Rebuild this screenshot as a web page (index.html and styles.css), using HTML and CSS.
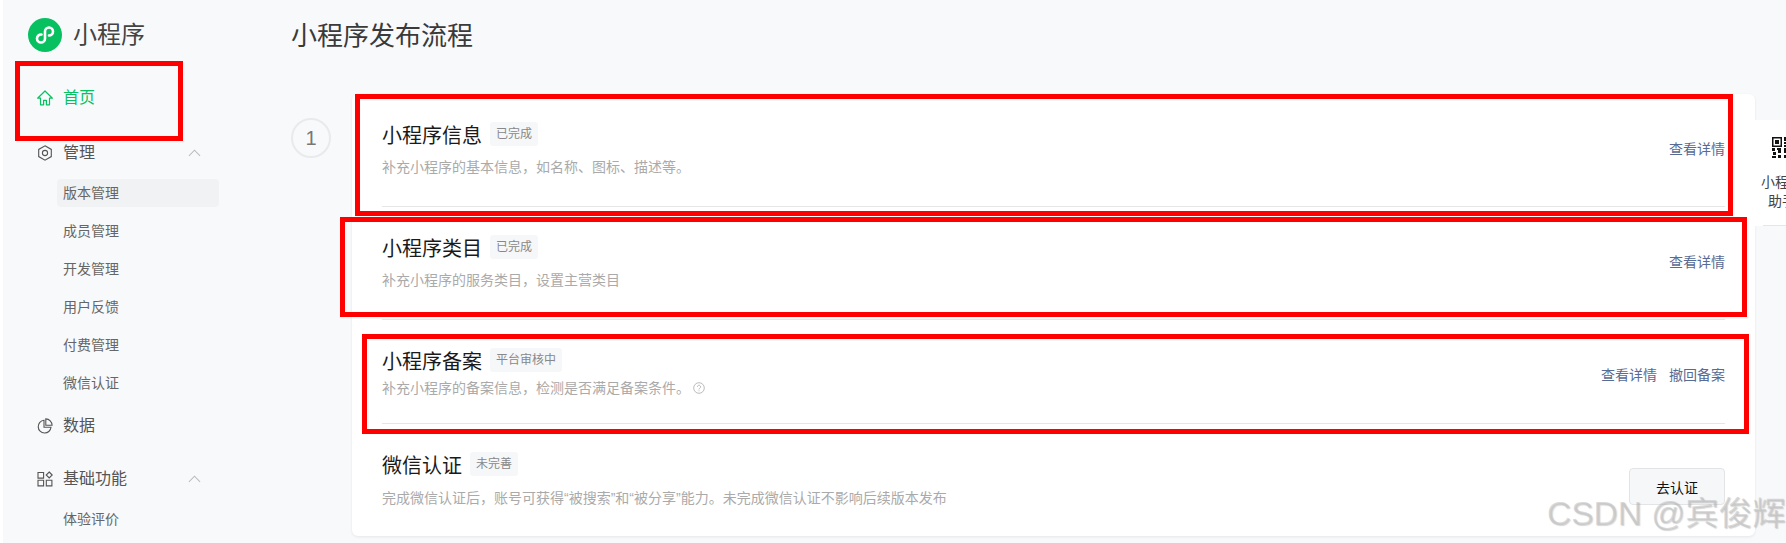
FILE: index.html
```html
<!DOCTYPE html>
<html lang="zh-CN">
<head>
<meta charset="utf-8">
<title>小程序发布流程</title>
<link rel="stylesheet" href="styles.css">
</head>
<body>
<div class="page">
  <aside class="sidebar">
    <div class="brand">
      <svg class="logo" viewBox="0 0 34 34"><circle cx="17" cy="17" r="17" fill="#07c160"/><path d="M9 20.500a4 4 0 1 0 8 0v-7a4 4 0 1 1 4 4M13.500 16.500a4 4 0 0 0-4.500 4" fill="none" stroke="#fff" stroke-width="2.600" stroke-linecap="round"/></svg>
      <span class="brand-name">小程序</span>
    </div>
    <nav class="nav">
      <div class="nav-item active home">
        <svg class="ico" viewBox="0 0 16 16"><path d="M8 1 .6 8.200h2.900v6.600h3.100v-4.500h2.800v4.500h3.100V8.200h2.900z" fill="none" stroke="currentColor" stroke-width="1.200" stroke-linejoin="round"/></svg>
        <span>首页</span>
      </div>
      <div class="nav-item manage">
        <svg class="ico" viewBox="0 0 16 16"><path d="M8 .8l6.300 3.600v7.200L8 15.200l-6.300-3.600V4.400z" fill="none" stroke="currentColor" stroke-width="1.100"/><circle cx="8" cy="8" r="2.600" fill="none" stroke="currentColor" stroke-width="1.100"/></svg>
        <span>管理</span>
        <svg class="chev" viewBox="0 0 14 8"><path d="M1 7l6-6 6 6" fill="none" stroke="#bbb" stroke-width="1.100"/></svg>
      </div>
      <ul class="sub">
        <li class="sub-item current">版本管理</li>
        <li class="sub-item">成员管理</li>
        <li class="sub-item">开发管理</li>
        <li class="sub-item">用户反馈</li>
        <li class="sub-item">付费管理</li>
        <li class="sub-item">微信认证</li>
      </ul>
      <div class="nav-item data">
        <svg class="ico" viewBox="0 0 16 16"><path d="M7 2.300a6.400 6.400 0 1 0 7 7H7z" fill="none" stroke="currentColor" stroke-width="1.100"/><path d="M8.800.9a6.400 6.400 0 0 1 6.300 6.400H8.800z" fill="none" stroke="currentColor" stroke-width="1.100"/></svg>
        <span>数据</span>
      </div>
      <div class="nav-item basic">
        <svg class="ico" viewBox="0 0 16 16"><path d="M1 1.500h5.600v5.600H1zM1 9.300h5.600v5.600H1zM9.300 9.300h5.600v5.600H9.300zM12.200 1l3 3-3 3-3-3z" fill="none" stroke="currentColor" stroke-width="1.100"/></svg>
        <span>基础功能</span>
        <svg class="chev" viewBox="0 0 14 8"><path d="M1 7l6-6 6 6" fill="none" stroke="#bbb" stroke-width="1.100"/></svg>
      </div>
      <ul class="sub">
        <li class="sub-item">体验评价</li>
      </ul>
    </nav>
  </aside>

  <main class="main">
    <h1 class="title">小程序发布流程</h1>
    <div class="flow">
      <div class="step-no">1</div>
      <section class="card">
        <article class="row">
          <div class="row-text">
            <div class="row-head"><h2 class="row-title">小程序信息</h2><span class="tag">已完成</span></div>
            <p class="row-desc">补充小程序的基本信息，如名称、图标、描述等。</p>
          </div>
          <div class="row-actions"><a class="link">查看详情</a></div>
        </article>
        <article class="row">
          <div class="row-text">
            <div class="row-head"><h2 class="row-title">小程序类目</h2><span class="tag">已完成</span></div>
            <p class="row-desc">补充小程序的服务类目，设置主营类目</p>
          </div>
          <div class="row-actions"><a class="link">查看详情</a></div>
        </article>
        <article class="row row-tight">
          <div class="row-text">
            <div class="row-head"><h2 class="row-title">小程序备案</h2><span class="tag">平台审核中</span></div>
            <p class="row-desc">补充小程序的备案信息，检测是否满足备案条件。<svg class="help" viewBox="0 0 12 12"><circle cx="6" cy="6" r="5.300" fill="none" stroke="#aaa" stroke-width=".8"/><path d="M4.400 4.800a1.600 1.600 0 1 1 2.400 1.400c-.6.3-.8.6-.8 1.200M6 8.400v.9" fill="none" stroke="#aaa" stroke-width=".8"/></svg></p>
          </div>
          <div class="row-actions"><a class="link">查看详情</a><a class="link">撤回备案</a></div>
        </article>
        <article class="row row-last">
          <div class="row-text">
            <div class="row-head"><h2 class="row-title">微信认证</h2><span class="tag">未完善</span></div>
            <p class="row-desc">完成微信认证后，账号可获得“被搜索”和“被分享”能力。未完成微信认证不影响后续版本发布</p>
          </div>
          <button class="btn">去认证</button>
        </article>
      </section>
    </div>
  </main>

  <div class="helper">
    <svg class="qr" viewBox="0 0 21 21"><path fill="#111" d="M0 0h10v10H0zM1.500 1.500v7h7v-7zM3 3h4v4H3zM12 0h2v4h-2zM15 1h3v2h-3zM12 5h3v2h-3zM16 5h5v2h-5zM12 8h2v2h-2zM0 11h3v3H0zM5 11h4v2H5zM6 13h3v3H6zM1 15h3v3H1zM0 19h4v2H0zM6 18h3v3H6zM12 11h2v5h-2zM15 12h3v3h-3zM12 18h3v3h-3zM17 17h4v4h-4z"/></svg>
    <div class="helper-text">小程序<br>助手</div>
  </div>

  <div class="mark mark-1"></div>
  <div class="mark mark-2"></div>
  <div class="mark mark-3"></div>
  <div class="mark mark-4"></div>
  <div class="watermark">CSDN @宾俊辉</div>
</div>
</body>
</html>
```
FILE: styles.css
```css
* { box-sizing: border-box; }
html, body { margin: 0; padding: 0; }
body {
  font-family: "Liberation Sans", "Noto Sans CJK SC", sans-serif;
  background: #f8f9fb;
  color: #333;
}
.page {
  position: relative;
  display: flex;
  width: 1786px;
  height: 543px;
  overflow: hidden;
  background: #f8f9fb;
  border-left: 3px solid #fff;
}
.sidebar {
  width: 289px;
  flex: none;
  padding-left: 25px;
  border-left: 1px solid #e6e6e6;
  margin-left: -1px;
}
.brand {
  display: flex;
  align-items: center;
  height: 34px;
  margin-top: 18px;
  gap: 11px;
}
.logo { width: 34px; height: 34px; flex: none; }
.brand-name { font-size: 24px; line-height: 34px; color: #444; }
.nav { margin-top: 34px; width: 182px; margin-left: 9px; }
.nav-item {
  display: flex;
  align-items: center;
  height: 24px;
  font-size: 16px;
  line-height: 24px;
  color: #555;
}
.nav-item.active { color: #07c160; }
.home { margin-bottom: 31px; }
.data { margin-top: 17px; margin-bottom: 29px; }
.ico { width: 16px; height: 16px; margin-right: 10px; flex: none; }
.chev { width: 13px; height: 8px; margin-left: auto; margin-right: 18px; }
.sub { list-style: none; margin: 0; padding: 0 0 0 20px; }
.manage + .sub { margin-top: 14px; }
.basic + .sub { margin-top: 14px; }
.sub-item {
  height: 28px;
  margin-bottom: 10px;
  padding-left: 6px;
  font-size: 14px;
  line-height: 28px;
  color: #666;
  border-radius: 4px;
}
.sub-item:last-child { margin-bottom: 0; }
.sub-item.current { background: #f1f2f4; }
.main { flex: 1; min-width: 0; }
.title {
  margin: 17px 0 0;
  height: 38px;
  font-size: 26px;
  font-weight: 400;
  line-height: 38px;
  color: #3a3a3a;
}
.flow { display: flex; align-items: flex-start; margin-top: 39px; }
.step-no {
  width: 40px;
  height: 40px;
  flex: none;
  margin-top: 24px;
  margin-right: 21px;
  border: 2px solid #e9eaec;
  border-radius: 50%;
  font-size: 20px;
  line-height: 36px;
  text-align: center;
  color: #777;
}
.card {
  width: 1403px;
  flex: none;
  padding: 0 30px;
  background: #fff;
  border-radius: 6px;
  box-shadow: 0 1px 3px rgba(0, 0, 0, .08);
}
.row {
  display: flex;
  align-items: flex-start;
  justify-content: space-between;
  height: 113px;
  padding-top: 28px;
  border-bottom: 1px solid #e6e6e6;
}
.row-tight { height: 104px; }
.row-tight .row-desc { margin-top: 5px; }
.row-last { height: 112px; border-bottom: 0; }
.row-last .row-desc { margin-top: 11px; }
.row-head { display: flex; align-items: center; height: 24px; }
.row-title {
  margin: 0 8px 0 0;
  padding-top: 4px;
  font-size: 20px;
  font-weight: 400;
  line-height: 26px;
  color: #1a1a1a;
}
.tag {
  height: 24px;
  padding: 0 6px;
  font-size: 12px;
  line-height: 25px;
  color: #888;
  background: #f6f7f9;
  border-radius: 3px;
}
.row-desc {
  display: flex;
  align-items: center;
  margin: 10px 0 0;
  font-size: 14px;
  line-height: 22px;
  color: #aaa;
}
.help { width: 12px; height: 12px; margin-left: 3px; }
.row-actions { display: flex; gap: 12px; margin-top: -1px; padding-top: 17px; }
.link { font-size: 14px; line-height: 22px; color: #576b95; }
.btn {
  width: 96px;
  height: 37px;
  margin-top: 16px;
  padding: 1px 0 0;
  font: inherit;
  font-size: 14px;
  color: #111;
  background: #f6f7f9;
  border: 1px solid #e3e4e6;
  border-radius: 4px;
}
.helper {
  position: absolute;
  left: 1752px;
  top: 120px;
  width: 80px;
  height: 106px;
  padding-top: 17px;
  background: #fff;
  text-align: center;
}
.helper::after {
  content: "";
  position: absolute;
  left: 8px;
  right: 0;
  bottom: 0;
  height: 1px;
  background: #e6e6e6;
}
.qr { display: block; width: 21px; height: 21px; margin-left: 17px; }
.helper-text { width: 50px; margin-top: 15px; margin-left: 2px; font-size: 14px; line-height: 19px; color: #444; }
.mark {
  position: absolute;
  border: 5px solid #f00;
}
.mark-1 { left: 12px; top: 61px; width: 168px; height: 80px; }
.mark-2 { left: 352px; top: 94px; width: 1378px; height: 122px; }
.mark-3 { left: 337px; top: 217px; width: 1407px; height: 100px; }
.mark-4 { left: 359px; top: 334px; width: 1387px; height: 100px; }
.watermark {
  position: absolute;
  left: 1544px;
  top: 492px;
  font-size: 33.500px;
  line-height: 44px;
  white-space: nowrap;
  color: rgba(190, 190, 190, .55);
  text-shadow: 1px 1px 1px rgba(120, 120, 120, .3);
}
```
